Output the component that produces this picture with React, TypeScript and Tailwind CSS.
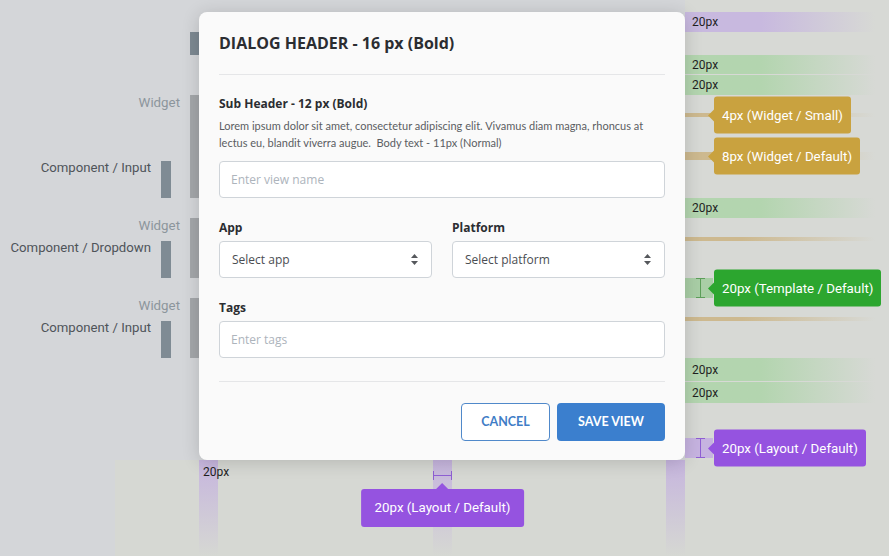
import React from 'react';

// spacing redline helpers
function Strip({ color, className, label }: { color: 'purple' | 'green'; className: string; label?: string }) {
  const bg =
    color === 'purple'
      ? 'bg-linear-to-r from-[#c8b9df] from-40% to-transparent'
      : 'bg-linear-to-r from-[#b3d5af] from-40% to-transparent';
  return (
    <div className={`w-[190px] flex items-center pl-[7px] text-[12px] text-[#1f1f1f] ${bg} ${className}`}>
      {label}
    </div>
  );
}

function Arrow({ color }: { color: string }) {
  return <div className={`w-0 h-0 border-y-[6px] border-y-transparent border-r-[6px] ${color}`} />;
}

function GoldLine({ className, text }: { className: string; text: string }) {
  return (
    <div className={`relative w-[190px] bg-linear-to-r from-[#cdb98f] from-30% to-transparent ${className}`}>
      <div className="absolute left-[23px] top-1/2 -translate-y-1/2 flex items-center">
        <Arrow color="border-r-[#c9a23f]" />
        <div className="h-[37px] flex items-center px-[8px] rounded-[3px] bg-[#c9a23f] text-white text-[13.3px] whitespace-nowrap">
          {text}
        </div>
      </div>
    </div>
  );
}

function GapMarker({ color, text }: { color: 'green' | 'purple'; text: string }) {
  const strip = color === 'green' ? 'bg-[#a9cea6]' : 'bg-[#c6b3e0]';
  const beam = color === 'green' ? 'bg-[#5d9f5a]' : 'bg-[#8f5fd3]';
  const box = color === 'green' ? 'bg-[#2ca62f]' : 'bg-[#9553e0]';
  const arrow = color === 'green' ? 'border-r-[#2ca62f]' : 'border-r-[#9553e0]';
  return (
    <div className={`relative h-[20px] w-[28px] ${strip}`}>
      {/* I-beam */}
      <div className="absolute left-[11px] top-0 h-[20px] w-[9px] flex flex-col items-center justify-between">
        <div className={`h-px w-[9px] ${beam}`} />
        <div className={`flex-1 w-px ${beam}`} />
        <div className={`h-px w-[9px] ${beam}`} />
      </div>
      <div className="absolute left-[23px] top-1/2 -translate-y-1/2 flex items-center">
        <Arrow color={arrow} />
        <div className={`h-[37px] flex items-center px-[8px] rounded-[3px] text-white text-[13.3px] whitespace-nowrap ${box}`}>
          {text}
        </div>
      </div>
    </div>
  );
}

function WidgetGuide({ className, component, barHeight }: { className: string; component: string; barHeight: string }) {
  return (
    <div className={`flex justify-end ${className}`}>
      <div className="flex flex-col items-end justify-between mr-[10px]">
        <span className="text-[13.3px] leading-[16px] text-[#8c959c]">Widget</span>
        <div className="flex items-start gap-[10px] mr-[9px]">
          <span className="text-[13.2px] leading-[16px] -mt-[1px] text-[#4f5459] whitespace-nowrap">{component}</span>
          <div className={`w-[10px] bg-[#7f8b94] ${barHeight}`} />
        </div>
      </div>
      <div className="w-[9px] bg-[#a4a7aa]" />
    </div>
  );
}

function LeftRail() {
  return (
    <div className="w-[199px] flex flex-col pt-[20px]">
      <div className="h-[23px] flex justify-end">
        <div className="w-[9px] bg-[#7d8992]" />
      </div>
      <div className="h-[40px]" />
      <WidgetGuide className="h-[103px]" component="Component / Input" barHeight="h-[37px]" />
      <div className="h-[20px]" />
      <WidgetGuide className="h-[60px]" component="Component / Dropdown" barHeight="h-[37px]" />
      <div className="h-[20px]" />
      <WidgetGuide className="h-[60px]" component="Component / Input" barHeight="h-[37px]" />
    </div>
  );
}

function RightRail() {
  return (
    <div className="flex-1 flex flex-col bg-[#d7d9d5]">
      <Strip color="purple" className="h-[20px]" label="20px" />
      <div className="h-[23px]" />
      <Strip color="green" className="h-[19px]" label="20px" />
      <div className="h-px" />
      <Strip color="green" className="h-[20px]" label="20px" />
      {/* widget 1 */}
      <div className="h-[103px] flex flex-col">
        <div className="h-[18px]" />
        <GoldLine className="h-[4px]" text="4px (Widget / Small)" />
        <div className="h-[35px]" />
        <GoldLine className="h-[8px]" text="8px (Widget / Default)" />
      </div>
      <Strip color="green" className="h-[20px]" label="20px" />
      {/* widget 2 */}
      <div className="h-[60px] flex flex-col">
        <div className="h-[19px]" />
        <div className="h-[4px] w-[190px] bg-linear-to-r from-[#cdb98f] from-30% to-transparent" />
      </div>
      <GapMarker color="green" text="20px (Template / Default)" />
      {/* widget 3 */}
      <div className="h-[60px] flex flex-col">
        <div className="h-[19px]" />
        <div className="h-[4px] w-[190px] bg-linear-to-r from-[#cdb98f] from-30% to-transparent" />
      </div>
      <Strip color="green" className="h-[23px]" label="20px" />
      <div className="h-px" />
      <Strip color="green" className="h-[21px]" label="20px" />
      <div className="h-[35px]" />
      <GapMarker color="purple" text="20px (Layout / Default)" />
    </div>
  );
}

function UpDown() {
  return (
    <svg width="7" height="11" viewBox="0 0 7 11" className="shrink-0">
      <path d="M3.5 0 L7 4 H0 Z" fill="#55585c" />
      <path d="M3.5 11 L0 7 H7 Z" fill="#55585c" />
    </svg>
  );
}

function SelectBox({ text }: { text: string }) {
  return (
    <div className="h-[37px] flex items-center justify-between pl-[12px] pr-[13px] bg-white border border-[#cfd4d9] rounded-[4px] text-[12px] text-[#4a4d52]">
      <span>{text}</span>
      <UpDown />
    </div>
  );
}

function TextBox({ placeholder, className = '' }: { placeholder: string; className?: string }) {
  return (
    <input
      placeholder={placeholder}
      className={`block w-full h-[37px] px-[11px] bg-white border border-[#cfd4d9] rounded-[4px] text-[12px] outline-none placeholder:text-[#adb4bc] ${className}`}
    />
  );
}

function Dialog() {
  return (
    <div className="relative z-10 w-[486px] h-[448px] flex flex-col bg-[#fafafa] rounded-[8px] shadow-[0_2px_18px_rgba(0,0,0,0.16)] font-['Open_Sans',sans-serif] text-[#2b2d31]">
      <div className="mx-[20px] pt-[20px] pb-[19px] border-b border-[#e5e6e8]">
        <h2 className="text-[16px] leading-[23px] font-bold">DIALOG HEADER - 16 px (Bold)</h2>
      </div>

      <div className="px-[20px] pt-[20px] pb-[23px] flex flex-col">
        <div className="h-[103px] flex flex-col">
          <h3 className="text-[12px] leading-[18px] font-bold">Sub Header - 12 px (Bold)</h3>
          <p className="mt-[4px] text-[11px] leading-[17px] text-[#5a5d62] font-['Lato',sans-serif]">
            Lorem ipsum dolor sit amet, consectetur adipiscing elit. Vivamus diam magna, rhoncus at
            <br />
            lectus eu, blandit viverra augue.&nbsp; Body text - 11px (Normal)
          </p>
          <TextBox placeholder="Enter view name" className="mt-[10px]" />
        </div>

        <div className="mt-[20px] h-[60px] grid grid-cols-2 gap-x-[20px]">
          <div className="flex flex-col">
            <label className="text-[12px] leading-[19px] font-bold">App</label>
            <div className="mt-[4px]">
              <SelectBox text="Select app" />
            </div>
          </div>
          <div className="flex flex-col">
            <label className="text-[12px] leading-[19px] font-bold">Platform</label>
            <div className="mt-[4px]">
              <SelectBox text="Select platform" />
            </div>
          </div>
        </div>

        <div className="mt-[20px] h-[60px] flex flex-col">
          <label className="text-[12px] leading-[19px] font-bold">Tags</label>
          <TextBox placeholder="Enter tags" className="mt-[4px]" />
        </div>
      </div>

      <div className="mx-[20px] pt-[21px] border-t border-[#e5e6e8] flex justify-end gap-[7px] font-['Lato',sans-serif]">
        <button className="w-[89px] h-[38px] rounded-[4px] border border-[#5089ca] bg-white text-[12.5px] font-bold text-[#3f7dc6]">
          CANCEL
        </button>
        <button className="w-[108px] h-[38px] rounded-[4px] bg-[#3b7fce] text-[12.5px] font-bold text-white">
          SAVE VIEW
        </button>
      </div>
    </div>
  );
}

function BottomRail() {
  const vstrip = 'w-[19px] bg-linear-to-b from-[#c6b5de] to-transparent';
  return (
    <div className="h-[96px] flex">
      <div className="w-[115px]" />
      <div className="flex-1 flex bg-[#d6d8d3]">
        <div className="w-[84px]" />
        <div className={`${vstrip} pt-[3px] pl-[4px] text-[12px] text-[#1f1f1f] whitespace-nowrap`}>20px</div>
        <div className="w-[215px]" />
        <div className={`relative ${vstrip}`}>
          {/* horizontal I-beam */}
          <div className="absolute left-0 top-[11px] w-[19px] h-[9px] flex items-center justify-between">
            <div className="w-px h-[9px] bg-[#8f5fd3]" />
            <div className="flex-1 h-px bg-[#8f5fd3]" />
            <div className="w-px h-[9px] bg-[#8f5fd3]" />
          </div>
          <div className="absolute top-[23px] left-1/2 -translate-x-1/2 flex flex-col items-center">
            <div className="w-0 h-0 border-x-[6px] border-x-transparent border-b-[6px] border-b-[#9553e0]" />
            <div className="h-[38px] flex items-center px-[14px] rounded-[3px] bg-[#9553e0] text-white text-[13.3px] whitespace-nowrap">
              20px (Layout / Default)
            </div>
          </div>
        </div>
        <div className="w-[214px]" />
        <div className={vstrip} />
      </div>
    </div>
  );
}

export default function App() {
  return (
    <div className="w-[889px] h-[556px] overflow-hidden flex flex-col bg-[#d4d6d9] font-['Roboto',sans-serif]">
      <div className="h-[12px] flex">
        <div className="w-[685px]" />
        <div className="flex-1 bg-[#d7d9d5]" />
      </div>
      <div className="h-[448px] flex">
        <LeftRail />
        <Dialog />
        <RightRail />
      </div>
      <BottomRail />
    </div>
  );
}
